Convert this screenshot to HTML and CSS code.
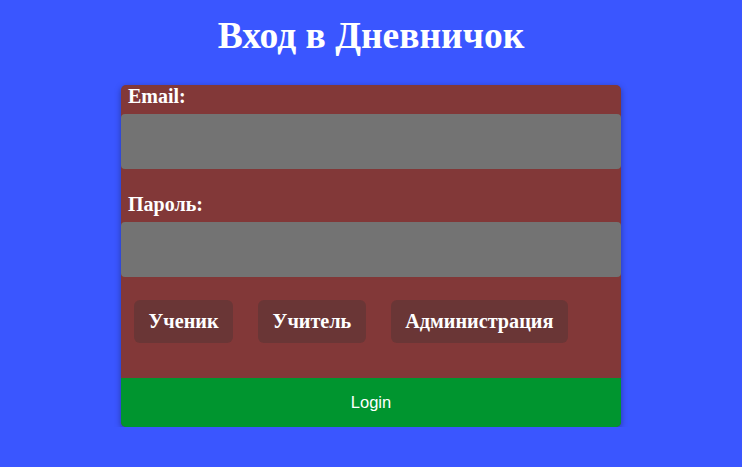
FILE: index.html
```html
<!DOCTYPE html>
<html lang="ru">
<head>
<meta charset="utf-8">
<title>Вход в Дневничок</title>
<link rel="stylesheet" href="styles.css">
</head>
<body>
<h1 class="title">Вход в Дневничок</h1>
<form class="card">
  <label class="label">Email:</label>
  <div class="input"></div>
  <label class="label label-second">Пароль:</label>
  <div class="input"></div>
  <div class="roles">
    <button type="button" class="role">Ученик</button>
    <button type="button" class="role">Учитель</button>
    <button type="button" class="role">Администрация</button>
  </div>
  <button type="button" class="login">Login</button>
</form>
</body>
</html>
```
FILE: styles.css
```css
html, body {
  margin: 0;
  padding: 0;
}
body {
  background: #3a56ff;
  font-family: "Liberation Serif", "Times New Roman", serif;
  color: #fff;
  display: flex;
  flex-direction: column;
  align-items: center;
}
.title {
  margin: 0;
  padding-top: 14px;
  height: 85px;
  box-sizing: border-box;
  font-size: 37.5px;
  line-height: 44px;
  font-weight: bold;
  text-align: center;
}
.card {
  width: 500px;
  background: #823838;
  border-radius: 5px;
  box-shadow: 0 2px 6px rgba(0, 0, 0, 0.35);
  display: flex;
  flex-direction: column;
  overflow: hidden;
}
.label {
  display: block;
  height: 29px;
  padding: 0 7px;
  font-size: 20px;
  font-weight: bold;
  line-height: 22px;
}
.label-second {
  margin-top: 24px;
}
.input {
  height: 55px;
  background: #737373;
  border-radius: 4px;
}
.roles {
  display: flex;
  gap: 25px;
  padding: 23px 13px 35px;
}
.role {
  height: 43px;
  padding: 0 14.5px;
  border: none;
  border-radius: 6px;
  background: #6a3636;
  color: #fff;
  font-family: "Liberation Serif", "Times New Roman", serif;
  font-size: 20.2px;
  font-weight: bold;
}
.login {
  height: 49px;
  border: none;
  background: #00952f;
  color: #fff;
  font-family: "Liberation Sans", Arial, sans-serif;
  font-size: 16.5px;
}
```
